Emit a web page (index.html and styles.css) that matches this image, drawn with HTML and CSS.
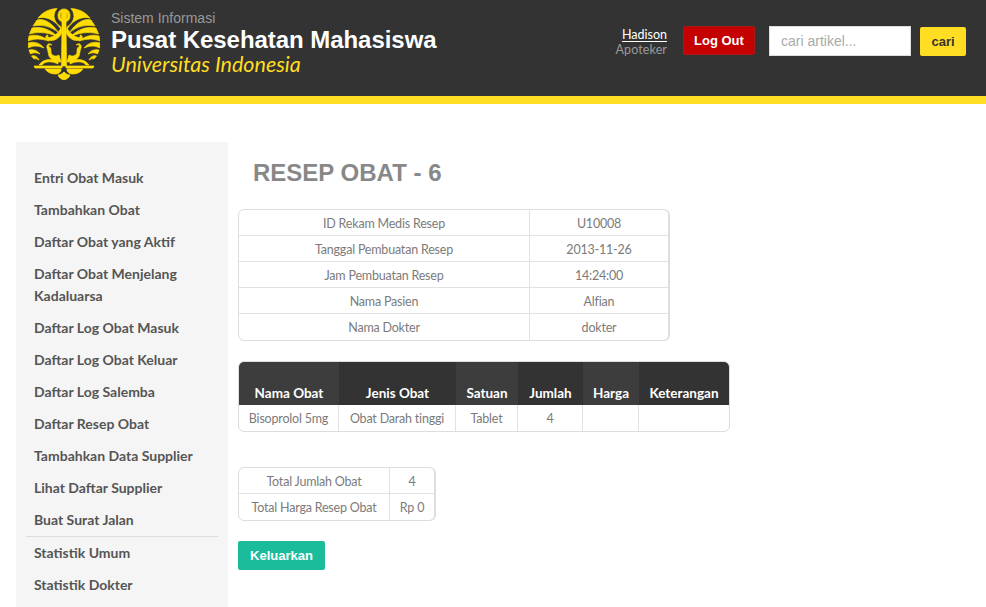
FILE: index.html
```html
<!DOCTYPE html>
<html>

<head>
    <meta charset="UTF-8">
    <meta name="viewport" content="width=device-width">
    <title>Resep Obat - 6</title>
    <link rel="stylesheet" href="styles.css">
</head>

<body>
    <header class="top">
        <div class="brand">
            <svg class="logo" viewBox="0 0 72 74" aria-hidden="true">
                <defs>
                    <g id="half">
                        <path d="M33 21C27 17 23 10 29 2.5C20 3 14 7 10 12C17 10 26 13 33 23Z" />
                        <path d="M9 14C16 12 24 17 30 26C23 21 15 18 5 20Z" />
                        <path d="M4 22C13 20 22 23 30 31C22 27 12 25 1.5 28Z" />
                        <path d="M1 30C8 28 15 30 21 35C14 33 8 32 0 35Z" />
                        <path d="M0 37C6 35 12 37 16 42C11 40 6 39 .5 42Z" />
                        <path d="M1 44C5 43 9 44 12 48C9 47 6 46 2.5 48Z" />
                        <path d="M3.500 50C6 49 9 50 11 54C9 53 7 52 6 53Z" />
                        <path d="M34 26C32 32 26 36 20 34C17 33 17 29 20 29C19 31 21 32 23 31C27 30 30 27 33 22Z" />
                        <path d="M24 39C21 38 20 40 21 41C23 41 23 44 23 47C24 50 28 51 31 49L33 56C28 56 23 54 21 50C20 47 20 44 19 42C18 39 21 36 24 39Z" />
                        <path d="M11 59C15 53 24 52 30 56L30 58C24 55 17 55 14 59Z" />
                        <path d="M6 60H34V62H7Z" />
                        <path d="M17 63H33C33 67 30 68 27 68C23 68 19 66 17 63Z" />
                        <path d="M30 69C32 69 34 68 36 66V74C33 73 31 72 30 69Z" />
                    </g>
                </defs>
                <use href="#half" />
                <use href="#half" transform="translate(72 0) scale(-1 1)" />
                <path fill-rule="evenodd" d="M36 3C40 3 42 6 42 10C42 13 40 15 38 16L38.500 60H33.500L34 16C32 15 30 13 30 10C30 6 32 3 36 3ZM33 6C32 8 32 12 33.500 13.500L33.500 6ZM39 6L38.500 13.500C40 12 40 8 39 6Z" />
            </svg>
            <div class="brand-text">
                <div class="brand-small">Sistem Informasi</div>
                <div class="brand-name">Pusat Kesehatan Mahasiswa</div>
                <div class="brand-uni">Universitas Indonesia</div>
            </div>
        </div>
        <div class="tools">
            <div class="user">
                <a class="user-name" href="#">Hadison</a>
                <div class="user-role">Apoteker</div>
            </div>
            <button class="btn-logout">Log Out</button>
            <input class="search" type="text" placeholder="cari artikel...">
            <button class="btn-cari">cari</button>
        </div>
    </header>

    <div class="page">
        <nav class="side">
            <a href="#">Entri Obat Masuk</a>
            <a href="#">Tambahkan Obat</a>
            <a href="#">Daftar Obat yang Aktif</a>
            <a href="#">Daftar Obat Menjelang Kadaluarsa</a>
            <a href="#">Daftar Log Obat Masuk</a>
            <a href="#">Daftar Log Obat Keluar</a>
            <a href="#">Daftar Log Salemba</a>
            <a href="#">Daftar Resep Obat</a>
            <a href="#">Tambahkan Data Supplier</a>
            <a href="#">Lihat Daftar Supplier</a>
            <a href="#">Buat Surat Jalan</a>
            <hr>
            <a href="#">Statistik Umum</a>
            <a href="#">Statistik Dokter</a>
        </nav>

        <main class="content">
            <h1>RESEP OBAT - 6</h1>

            <table class="tbl tbl-info">
                <colgroup>
                    <col class="c-291">
                    <col class="c-138">
                </colgroup>
                <tr><td>ID Rekam Medis Resep</td><td>U10008</td></tr>
                <tr><td>Tanggal Pembuatan Resep</td><td>2013-11-26</td></tr>
                <tr><td>Jam Pembuatan Resep</td><td>14:24:00</td></tr>
                <tr><td>Nama Pasien</td><td>Alfian</td></tr>
                <tr><td>Nama Dokter</td><td>dokter</td></tr>
            </table>

            <table class="tbl tbl-obat">
                <colgroup>
                    <col class="c-100">
                    <col class="c-117">
                    <col class="c-62">
                    <col class="c-65">
                    <col class="c-56">
                    <col class="c-90">
                </colgroup>
                <tr>
                    <th>Nama Obat</th>
                    <th>Jenis Obat</th>
                    <th>Satuan</th>
                    <th>Jumlah</th>
                    <th>Harga</th>
                    <th>Keterangan</th>
                </tr>
                <tr>
                    <td>Bisoprolol 5mg</td>
                    <td>Obat Darah tinggi</td>
                    <td>Tablet</td>
                    <td>4</td>
                    <td></td>
                    <td></td>
                </tr>
            </table>

            <table class="tbl tbl-total">
                <colgroup>
                    <col class="c-151">
                    <col class="c-44">
                </colgroup>
                <tr><td>Total Jumlah Obat</td><td>4</td></tr>
                <tr><td>Total Harga Resep Obat</td><td>Rp 0</td></tr>
            </table>

            <button class="btn-keluar">Keluarkan</button>
        </main>
    </div>
</body>

</html>
```

FILE: styles.css
```css
* {
    box-sizing: border-box;
}

html,
body {
    height: 100%;
}

body {
    margin: 0;
    overflow: hidden;
    background: #fff;
    font-family: Lato, sans-serif;
    color: #7b7b7b;
}

/* Header */
.top {
    display: flex;
    justify-content: space-between;
    height: 104px;
    padding: 6px 20px 0 28px;
    background: #333;
    border-bottom: 8px solid #ffdd22;
}

.brand {
    display: flex;
    gap: 11px;
}

.logo {
    width: 72px;
    height: 74px;
    fill: #ffdd00;
    stroke: #ffdd00;
    stroke-width: 0.7;
}

.brand-text {
    padding-top: 4px;
}

.brand-small {
    font: 14px/16px "Liberation Sans", sans-serif;
    color: #999;
}

.brand-name {
    font: bold 24px/28px "Liberation Sans", sans-serif;
    letter-spacing: -0.05px;
    color: #fff;
}

.brand-uni {
    font: italic 21.5px/20px Lato, sans-serif;
    color: #ffdd22;
}

.tools {
    display: flex;
    align-items: flex-start;
    padding-top: 20px;
}

.user {
    margin-top: -1px;
    margin-right: 16px;
    text-align: right;
    line-height: 15px;
}

.user-name {
    font-size: 12.5px;
    color: #fff;
    text-decoration: underline;
    text-underline-offset: 2px;
}

.user-role {
    font-size: 12.5px;
    letter-spacing: 0.1px;
    color: #999;
}

.btn-logout {
    width: 72px;
    height: 29px;
    margin-right: 14px;
    padding: 0;
    border: 1px solid #a81a1a;
    border-radius: 2px;
    background: #c40000;
    color: #fff;
    font: bold 13px "Liberation Sans", sans-serif;
}

.search {
    width: 142px;
    height: 30px;
    margin-right: 9px;
    padding: 0 11px;
    border: 1px solid #ddd;
    background: #fff;
    font: 14px "Liberation Sans", sans-serif;
}

.search::placeholder {
    color: #aaa;
}

.btn-cari {
    width: 46px;
    height: 29px;
    margin-top: 1px;
    padding: 0;
    border: none;
    border-radius: 2px;
    background: #ffdd22;
    color: #333;
    font: bold 13px "Liberation Sans", sans-serif;
}

/* Sidebar */
.page {
    display: flex;
    padding: 38px 0 0 16px;
}

.side {
    flex: none;
    width: 212px;
    height: 480px;
    padding: 20px 10px;
    background: #f5f5f5;
}

.side a {
    display: block;
    padding: 5px 8px;
    font-size: 14px;
    font-weight: 700;
    line-height: 22px;
    color: #555;
    text-decoration: none;
}

.side hr {
    height: 1px;
    margin: 0;
    border: none;
    background: #ddd;
}

/* Contenu */
.content {
    padding: 0 0 0 10px;
}

h1 {
    margin: 0;
    padding: 16px 0 21px 15px;
    font: bold 24px/30px "Liberation Sans", sans-serif;
    color: #888;
}

.tbl {
    table-layout: fixed;
    border-collapse: separate;
    border-spacing: 0;
    border: 1px solid #ddd;
    border-radius: 6px;
    font-size: 12.5px;
    letter-spacing: -0.2px;
    text-align: center;
    color: #7b7b7b;
}

.tbl td {
    height: 26px;
    padding: 1px 0 0;
    border-bottom: 1px solid #e2e2e2;
    border-right: 1px solid #e2e2e2;
}

.tbl tr:last-child td {
    border-bottom: none;
}

.tbl td:last-child {
    border-right: none;
}

.tbl th {
    height: 43px;
    padding: 0 0 4px;
    vertical-align: bottom;
    background: #333;
    color: #fff;
    font-size: 13.5px;
    font-weight: 700;
    letter-spacing: 0;
}

.tbl th:nth-child(odd) {
    background: #3d3d3d;
}

.tbl th:first-child {
    border-top-left-radius: 5px;
}

.tbl th:last-child {
    border-top-right-radius: 5px;
}

.tbl-info {
    width: 431px;
    box-shadow: 1px 0 0 #ddd;
}

.tbl-obat {
    width: 492px;
    margin-top: 20px;
}

.tbl-total {
    width: 197px;
    margin-top: 35px;
    box-shadow: 1px 0 0 #ddd;
}

.c-291 { width: 291px; }
.c-138 { width: 138px; }
.c-100 { width: 100px; }
.c-117 { width: 117px; }
.c-62 { width: 62px; }
.c-65 { width: 65px; }
.c-56 { width: 56px; }
.c-90 { width: 90px; }
.c-151 { width: 151px; }
.c-44 { width: 44px; }

.btn-keluar {
    display: block;
    width: 87px;
    height: 29px;
    margin-top: 20px;
    padding: 0;
    border: none;
    border-radius: 2px;
    background: #1abc9c;
    color: #fff;
    font: bold 13px "Liberation Sans", sans-serif;
}
```
